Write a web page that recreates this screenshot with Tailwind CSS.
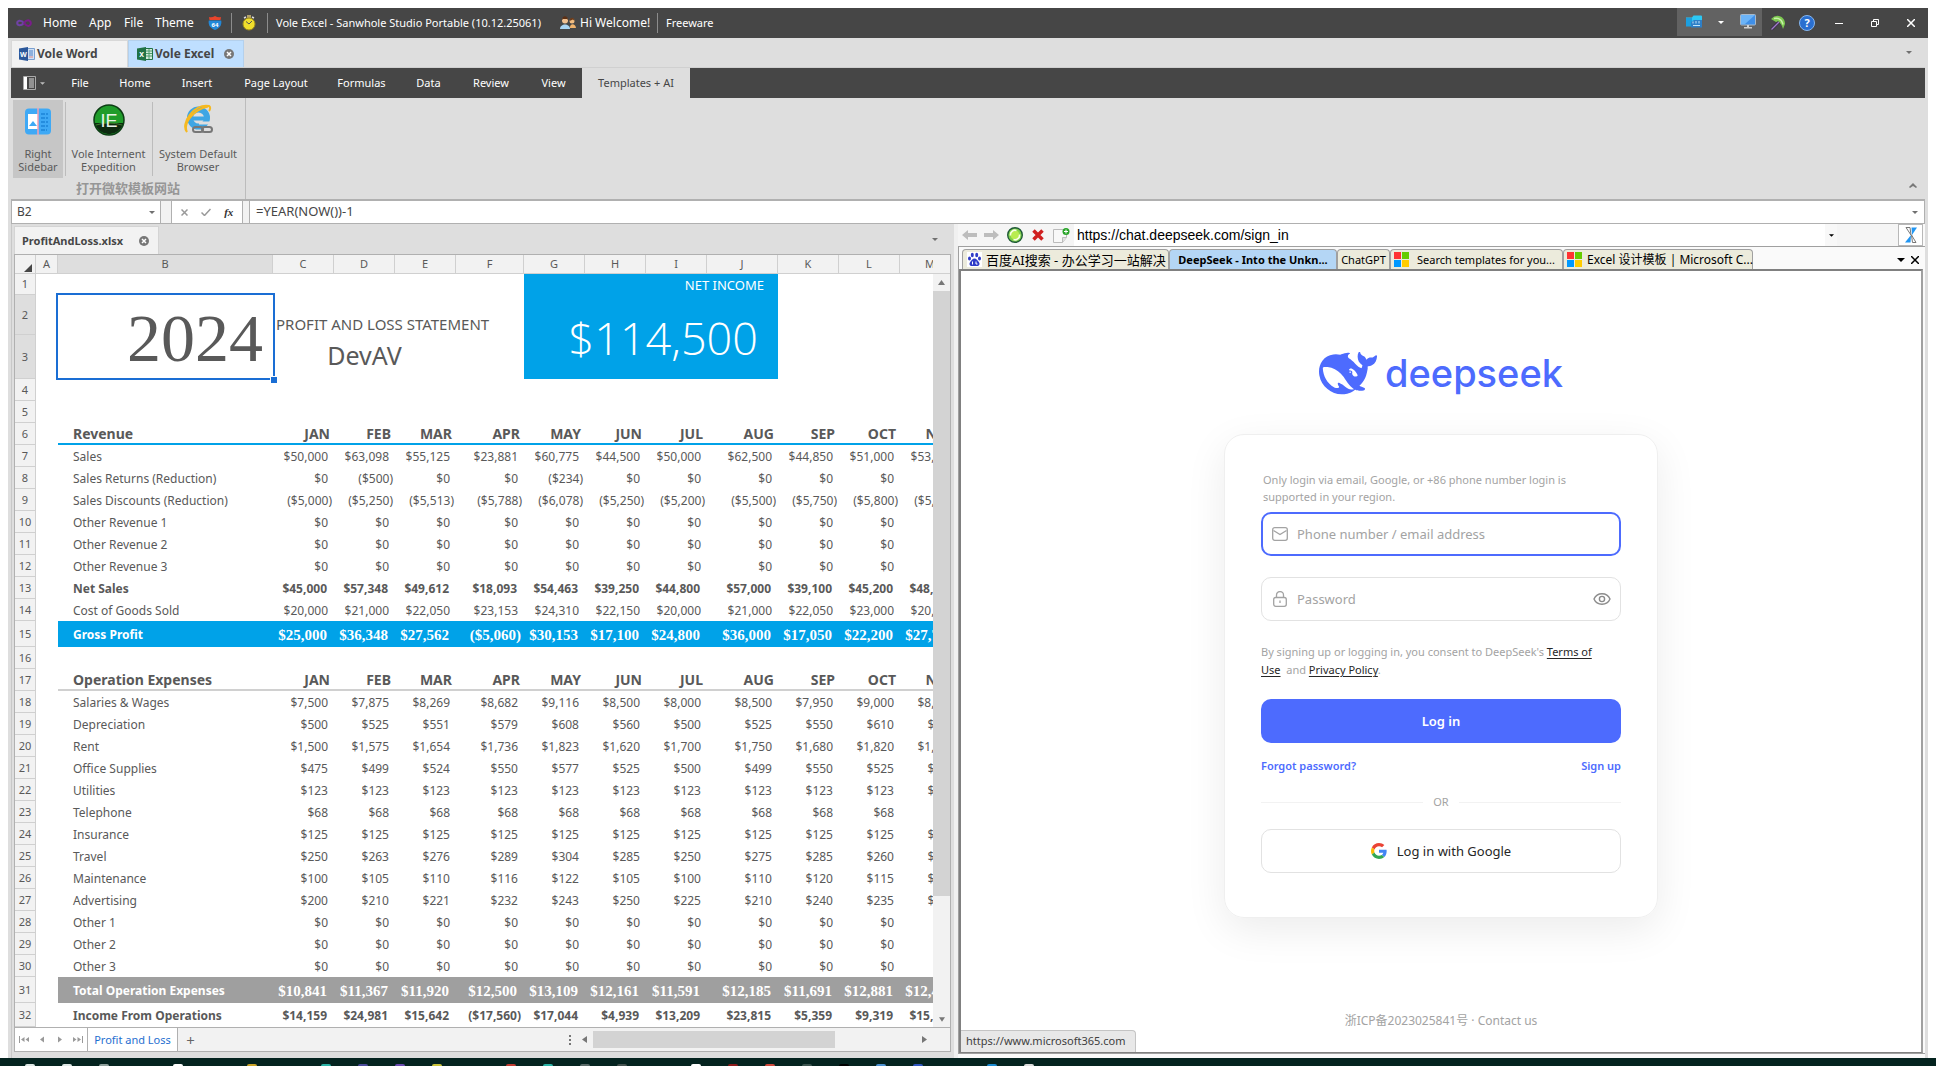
<!DOCTYPE html>
<html lang="en">
<head>
<meta charset="utf-8">
<title>Vole Excel</title>
<script src="https://cdn.jsdelivr.net/npm/@tailwindcss/browser@4"></script>
</head>
<body class="h-screen overflow-hidden bg-white pt-2 flex flex-col text-[12px] leading-4 text-[#464646] font-['Noto_Sans','Noto_Sans_CJK_SC',sans-serif]">
<div class="mx-2 flex-1 min-h-0 flex flex-col bg-[#dedede]">

  <!-- title bar -->
  <header class="h-[30px] shrink-0 bg-[#464646] text-white flex items-center whitespace-nowrap">
    <svg class="ml-2 w-4 h-4" viewBox="0 0 16 16" fill="none" stroke-width="2"><path d="M8 8C6 5.500 4.500 5.500 3.300 5.700 .5 6.300.5 9.700 3.300 10.300 5 10.500 6.500 9.500 8 8" stroke="#6f42a5"/><path d="M8 8C10 5.500 11.500 5 13 5.500c2.500 1 2.500 4.500 0 5.300C11 11.300 9.500 10 8 8" stroke="#7b1c8c"/></svg>
    <nav class="flex items-center ml-[11px]">
      <button class="w-[46px] text-left">Home</button><button class="w-[35px] text-left">App</button><button class="w-[31px] text-left">File</button><button class="w-[53px] text-left">Theme</button>
    </nav>
    <svg class="w-[14px] h-[14px]" viewBox="0 0 14 14"><path d="M1 1q3 .8 6-1 3 1.800 6 1l-.5 3H1.500z" fill="#e8452c"/><path d="M.8 4.500h12.400C14 9 12 12 7 14 2 12 0 9 .8 4.500z" fill="#2388d8"/><text x="7" y="10.500" font-size="6" font-weight="bold" text-anchor="middle" fill="#fff">64</text></svg>
    <span class="w-px h-5 bg-[#8c8c8c] ml-[9px]"></span>
    <svg class="w-[14px] h-4 ml-[10px]" viewBox="0 0 14 16"><rect x="5" width="4" height="3" fill="#b5a46a"/><path d="M2 3l2-1M12 3l-2-1" stroke="#ddd" stroke-width="1.500"/><circle cx="7" cy="9" r="6" fill="#f0de2c" stroke="#a08c1c"/><path d="M4 6.500L7 9l3-3" stroke="#555" fill="none"/></svg>
    <span class="w-px h-5 bg-[#8c8c8c] ml-[11px]"></span>
    <span class="ml-2 w-[284px] text-[11px]">Vole Excel - Sanwhole Studio Portable (10.12.25061)</span>
    <svg class="w-4 h-[14px]" viewBox="0 0 16 14"><circle cx="5" cy="4.500" r="3" fill="#f0c090"/><path d="M2 4c0-5 6-5 6 0L7 3H3z" fill="#5b3015"/><path d="M0 13c0-6 10-6 10 0z" fill="#a9d4f2"/><circle cx="12" cy="5" r="2.500" fill="#f2bd80"/><path d="M9.500 5c0-4.500 5-4.500 5 0L13 3.500z" fill="#6b3c1c"/><path d="M10 12c-.5-5 5.500-5 6 0z" fill="#f1b46c"/></svg>
    <span class="ml-1 w-[77px]">Hi Welcome!</span>
    <span class="w-px h-5 bg-[#8c8c8c]"></span>
    <span class="ml-2 text-[11px]">Freeware</span>
    <span class="flex-1"></span>
    <div class="flex items-center h-7 self-start bg-[#626262] w-[85px]">
      <button aria-label="Open folder" class="ml-[9px]"><svg class="w-4 h-[14px]" viewBox="0 0 16 14"><path d="M0 2.500h6l1.500-2H15q1 0 1 1V8H0z" fill="#2cc8f5"/><path d="M0 3h6v8.500H0z" fill="#1c9fe0"/><path d="M5 7l3-2h8v7.500H5z" fill="#2d7fc8"/><path d="M7 6.500v2M10 6v2.500M13 6v2.500M7 10.500h7" stroke="#bfe4fa"/></svg></button>
      <svg class="w-[6px] h-[3px] ml-[16px]" viewBox="0 0 6 3"><path d="M0 0h6L3 3z" fill="#fff"/></svg>
      <button aria-label="Display" class="ml-[16px]"><svg class="w-4 h-4" viewBox="0 0 16 16"><rect x=".5" y=".5" width="15" height="10.500" rx="1" fill="#3f8fe8" stroke="#a8b8c8"/><path d="M1 1h14L5 10H1z" fill="#6cb4f8"/><path d="M7 11h2v2h3v1.500H4V13h3z" fill="#d0d0d0"/></svg></button>
    </div>
    <button aria-label="Tools" class="ml-2"><svg class="w-4 h-4" viewBox="0 0 16 16"><path d="M1 4q4-4 8-3c4 1 6 4 6 8l-2 5c-1-5-4-8-7-7z" fill="#7cc850"/><path d="M4 3.500c5-1 8 2 9 6" stroke="#c9f0a8" stroke-width="1.500" fill="none"/><path d="M1.500 14.500L9 7" stroke="#3c2c4c" stroke-width="3"/><path d="M1.500 14.500L9 7" stroke="#a07cc8" stroke-width="1.200"/></svg></button>
    <button aria-label="Help" class="ml-[13px] w-4 h-4 rounded-full bg-[#2a6fd0] border border-[#86b6ee] text-[11px] leading-[14px] font-bold">?</button>
    <button aria-label="Minimize" class="ml-5 w-2"><svg class="w-2 h-2" viewBox="0 0 8 8"><path d="M0 4.500h8" stroke="#fff"/></svg></button>
    <button aria-label="Restore" class="ml-7 w-2"><svg class="w-2 h-2" viewBox="0 0 8 8" fill="none" stroke="#fff"><path d="M.5 2.500h5v5h-5zM2.500 2.500v-2h5v5h-2"/></svg></button>
    <button aria-label="Close" class="ml-7 mr-[13px] w-2"><svg class="w-2 h-2" viewBox="0 0 8 8"><path d="M0 0l8 8M8 0L0 8" stroke="#fff" stroke-width="1.500"/></svg></button>
  </header>

  <!-- document tabs -->
  <div class="h-[30px] shrink-0 flex items-end mx-[3px] font-bold text-[12px] border-b border-[#d0d0d0]">
    <button class="h-[27px] w-[117px] bg-[#f2f2f2] border border-b-0 border-[#d8d8d8] flex items-center pl-[7px] gap-[2px] whitespace-nowrap">
      <svg class="w-4 h-[14px] shrink-0" viewBox="0 0 16 14"><path d="M8 1.500h7.500v11H8z" fill="#cfe0f5" stroke="#7ba0d0"/><path d="M10 4h4M10 6h4M10 8h4" stroke="#4c80c4"/><path d="M10 10h4" stroke="#d88"/><path d="M0 1.500L9 0v14L0 12.500z" fill="#2b579a"/><text x="4.500" y="9.500" font-size="7" text-anchor="middle" fill="#fff">W</text></svg>Vole Word</button>
    <button class="h-[27px] w-[116px] bg-[#bfdfff] border border-b-0 border-[#b4d0ec] flex items-center pl-[8px] gap-[2px] whitespace-nowrap">
      <svg class="w-4 h-[14px] shrink-0" viewBox="0 0 16 14"><path d="M8 1.500h7.500v11H8z" fill="#d5ecdd" stroke="#217346"/><path d="M9 4h6M9 6.500h6M9 9h6M12 2v10" stroke="#4c9c6c"/><path d="M0 1.500L9 0v14L0 12.500z" fill="#217346"/><text x="4.500" y="9.500" font-size="7" text-anchor="middle" fill="#fff">X</text></svg>Vole Excel
      <svg class="w-[10px] h-[10px] ml-auto mr-[9px]" viewBox="0 0 10 10"><circle cx="5" cy="5" r="5" fill="#777"/><path d="M3 3l4 4M7 3L3 7" stroke="#fff" stroke-width="1.500"/></svg></button>
    <svg class="w-[6px] h-[3px] ml-auto mr-[13px] mb-[13px]" viewBox="0 0 6 3"><path d="M0 0h6L3 3z" fill="#707070"/></svg>
  </div>

  <!-- ribbon tabs -->
  <div class="h-[30px] shrink-0 mx-[3px] bg-[#464646] text-white text-[11px] flex items-stretch whitespace-nowrap">
    <button aria-label="Application menu" class="w-11 flex items-center pl-3 gap-1"><svg class="w-[13px] h-[14px]" viewBox="0 0 13 14"><path d="M.5.5h12v13H.5z" fill="none" stroke="#aaa"/><path d="M1 1h3v12H1z" fill="#fff"/><path d="M6 3h5M6 5h5M6 7h5M6 9h5M6 11h5" stroke="#ddd"/></svg><svg class="w-[5px] h-[3px]" viewBox="0 0 6 3"><path d="M0 0h6L3 3z" fill="#bbb"/></svg></button>
    <button class="w-[50px]">File</button><button class="w-[60px]">Home</button><button class="w-[64px]">Insert</button><button class="w-[94px]">Page Layout</button><button class="w-[77px]">Formulas</button><button class="w-[57px]">Data</button><button class="w-[68px]">Review</button><button class="w-[57px]">View</button><button class="w-[108px] bg-[#dedede] text-[#464646]">Templates + AI</button>
  </div>

  <!-- ribbon -->
  <div class="h-[103px] shrink-0 mx-[3px] border-b-2 border-[#b0b0b0] flex justify-between text-[11px] leading-[13px] text-[#5a5a5a]">
    <div class="w-[235px] border-r border-[#bcbcbc] flex flex-col">
      <div class="flex h-[78px] mt-[2px] pl-[2px]">
        <button class="w-[50px] bg-[#c6c6c6] flex flex-col items-center pt-[8px]">
          <svg class="w-[26px] h-[27px]" viewBox="0 0 26 27"><rect width="26" height="26" y=".5" rx="4" fill="#3fa9f5"/><rect x="3" y="6" width="10" height="15" fill="#fff"/><path d="M4 18l4-5 4 5z" fill="#3fa9f5"/><path d="M16 6h7M16 10h7M16 14h7M16 18h7M16 22h6" stroke="#1d84d8" stroke-width="1.500" stroke-dasharray="4 1"/><path d="M13 0v27" stroke="#f6a0b0" stroke-width="1.500"/></svg>
          <span class="mt-[12px] text-center">Right<br>Sidebar</span></button>
        <span class="w-px bg-[#bcbcbc] mx-[2px] my-[2px]"></span>
        <button class="w-[81px] flex flex-col items-center pt-[4px]">
          <svg class="w-8 h-8" viewBox="0 0 32 32"><circle cx="16" cy="16" r="15" fill="#1f9c2a"/><path d="M1.500 19a15 15 0 0 0 29 0z" fill="#0d2a10"/><path d="M3 21q13-4 26 0" stroke="#3f7c2c" fill="none"/><circle cx="16" cy="16" r="15" fill="none" stroke="#0c3d14" stroke-width="1.500"/><text x="16" y="22.500" font-size="18" text-anchor="middle" fill="#e8f4e8" font-family="Liberation Sans">IE</text></svg>
          <span class="mt-[11px] text-center whitespace-nowrap">Vole Internent<br>Expedition</span></button>
        <span class="w-px bg-[#bcbcbc] ml-[3px] mr-px my-[2px]"></span>
        <button class="w-[88px] flex flex-col items-center pt-[4px]">
          <svg class="w-8 h-8" viewBox="0 0 32 32" fill="none"><circle cx="16.500" cy="14" r="8.500" stroke="#3ea6e4" stroke-width="6"/><path d="M9 14.500h18" stroke="#3ea6e4" stroke-width="4"/><path d="M17 17.500h11v3H17z" fill="#dedede"/><path d="M5 28C-2 20 12-1 27 2c2 1 1 4 0 5M5 28C1 20 10 6 26 2.500" stroke="#f5b921" stroke-width="2"/><rect x="11" y="23" width="10" height="5" rx="2.500" stroke="#777" stroke-width="2"/><rect x="20" y="23" width="10" height="5" rx="2.500" stroke="#777" stroke-width="2"/></svg>
          <span class="mt-[11px] text-center whitespace-nowrap">System Default<br>Browser</span></button>
      </div>
      <p class="text-center text-[13px] leading-[20px] font-bold text-[#969696] font-['Noto_Sans_CJK_SC',sans-serif]">打开微软模板网站</p>
    </div>
    <svg class="w-[8px] h-[5px] self-end mr-[8px] mb-[11px]" viewBox="0 0 8 5"><path d="M4 0l4 4-1 1-3-2-3 2-1-1z" fill="#777"/></svg>
  </div>

  <!-- formula row -->
  <div class="h-[23px] shrink-0 mx-[3px] flex bg-[#f2f2f2] border-b border-[#b0b0b0] text-[12px]">
    <div class="w-[150px] bg-white border-x border-[#b0b0b0] flex items-center pr-[5px]"><input aria-label="Name box" value="B2" class="w-full pl-[5px] outline-none"><svg class="w-[6px] h-[3px] shrink-0" viewBox="0 0 6 3"><path d="M0 0h6L3 3z" fill="#707070"/></svg></div>
    <div class="w-[72px] ml-[10px] bg-white border-x border-[#b0b0b0] flex items-center justify-around px-[2px]">
      <button aria-label="Cancel"><svg class="w-[7px] h-[7px]" viewBox="0 0 7 7"><path d="M.5.5l6 6M6.500.5l-6 6" stroke="#999" stroke-width="1.500"/></svg></button>
      <button aria-label="Enter"><svg class="w-[10px] h-[8px]" viewBox="0 0 10 8"><path d="M.5 4.500l3 3L9.500 1" fill="none" stroke="#999" stroke-width="1.500"/></svg></button>
      <button class="italic font-bold text-[11px] text-[#333] font-['Liberation_Serif',serif]">fx</button>
    </div>
    <div class="flex-1 ml-[6px] bg-white border-x border-[#b0b0b0] flex items-center pr-[6px]"><input aria-label="Formula" value="=YEAR(NOW())-1" class="flex-1 pl-[6px] pb-[2px] outline-none text-[13px]"><svg class="w-[6px] h-[3px]" viewBox="0 0 6 3"><path d="M0 0h6L3 3z" fill="#707070"/></svg></div>
  </div>

  <main class="flex-1 min-h-0 ml-[3px] mr-[3px] grid grid-cols-[minmax(0,943fr)_minmax(0,971fr)]">
    <!-- spreadsheet pane -->
    <section class="flex flex-col min-h-0 border-l border-[#c8c8c8] pl-[2px] pr-[3px] pb-[6px]">
      <div class="h-[30px] shrink-0 flex items-end justify-between">
        <button class="w-[145px] h-[28px] bg-[#f2f2f2] border border-b-0 border-[#d4d4d4] flex items-center justify-between pl-[7px] pr-[9px] font-bold text-[11px]">ProfitAndLoss.xlsx <svg class="w-[10px] h-[10px]" viewBox="0 0 10 10"><circle cx="5" cy="5" r="5" fill="#777"/><path d="M3 3l4 4M7 3L3 7" stroke="#fff" stroke-width="1.500"/></svg></button>
        <svg class="w-[6px] h-[3px] mr-[13px] mb-[13px]" viewBox="0 0 6 3"><path d="M0 0h6L3 3z" fill="#707070"/></svg>
      </div>
      <div class="flex-1 min-h-0 flex flex-col border border-[#b0b0b0] bg-[#f2f2f2]">
        <div class="flex-1 min-h-0 flex">
          <div class="flex-1 min-w-0 overflow-hidden bg-white">
            <table class="w-[886px] table-fixed border-separate border-spacing-0 text-[#595959] leading-4 whitespace-nowrap">
              <colgroup><col class="w-[21px]"><col class="w-[22px]"><col class="w-[215px]"><col class="w-[61px]"><col class="w-[61px]"><col class="w-[61px]"><col class="w-[68px]"><col class="w-[61px]"><col class="w-[61px]"><col class="w-[61px]"><col class="w-[71px]"><col class="w-[61px]"><col class="w-[61px]"><col class="w-[61px]"></colgroup>
              <thead><tr id="cols" class="h-[19px] text-[11px]"></tr></thead>
              <tbody id="cells"></tbody>
            </table>
          </div>
          <div class="w-[17px] shrink-0 flex flex-col items-center pb-[5px]">
            <div class="w-full h-[19px] shrink-0 border-b border-[#d0d0d0]"></div>
            <svg class="w-[7px] h-[5px] mt-[6px] mb-[6px] shrink-0" viewBox="0 0 7 5"><path d="M0 5h7L3.500 0z" fill="#777"/></svg>
            <div class="w-full bg-[#d3d3d3] grow-[606] basis-0"></div>
            <div class="grow-[121] basis-0"></div>
            <svg class="w-[6px] h-[5px] shrink-0" viewBox="0 0 7 5"><path d="M0 0h7L3.500 5z" fill="#777"/></svg>
          </div>
        </div>
        <div class="h-[24px] shrink-0 border-t border-[#b0b0b0] flex items-stretch">
          <div class="w-[73px] bg-white border-r border-[#b0b0b0] flex items-center justify-between px-[4px]">
            <button aria-label="First sheet"><svg class="w-[10px] h-[7px]" viewBox="0 0 10 7" fill="#999"><path d="M0 0h1v7H0zM5.500 1v5L2 3.500zM10 1v5L6.500 3.500z"/></svg></button>
            <button aria-label="Previous sheet"><svg class="w-[10px] h-[7px]" viewBox="0 0 10 7" fill="#999"><path d="M7 .5v6L3 3.500z"/></svg></button>
            <button aria-label="Next sheet"><svg class="w-[10px] h-[7px]" viewBox="0 0 10 7" fill="#999"><path d="M3 .5v6l4-3z"/></svg></button>
            <button aria-label="Last sheet"><svg class="w-[10px] h-[7px]" viewBox="0 0 10 7" fill="#999"><path d="M9 0h1v7H9zM0 1v5l3.500-2.500zM4.500 1v5L8 3.500z"/></svg></button>
          </div>
          <button class="w-[90px] bg-white border-r border-[#b0b0b0] text-[#1f6fd0] text-[11px] whitespace-nowrap">Profit and Loss</button>
          <button class="w-[25px] text-[15px] text-[#666]">+</button>
          <div class="flex-1"></div>
          <div class="w-[385px] flex items-center">
            <svg class="w-[2px] h-[10px] ml-[4px]" viewBox="0 0 2 10" fill="#777"><path d="M0 0h2v2H0zM0 4h2v2H0zM0 8h2v2H0z"/></svg>
            <svg class="w-[5px] h-[7px] ml-[11px]" viewBox="0 0 5 7"><path d="M5 0v7L0 3.500z" fill="#777"/></svg>
            <div class="w-[242px] h-[17px] ml-[6px] bg-[#d3d3d3]"></div>
            <svg class="w-[5px] h-[7px] ml-[87px]" viewBox="0 0 5 7"><path d="M0 0v7l5-3.500z" fill="#777"/></svg>
          </div>
        </div>
      </div>
    </section>

    <!-- browser pane -->
    <section class="flex flex-col min-h-0 bg-[#fafafa] border-l-4 border-[#f0f0f0] pb-[4px]">
      <div class="h-[22px] shrink-0 flex items-center bg-[#f5f5f5] mr-[2px]">
        <button aria-label="Back" class="ml-1"><svg class="w-[15px] h-[10px]" viewBox="0 0 15 10"><path d="M0 5l6-5v3h9v4H6v3z" fill="#bdbdbd"/></svg></button>
        <button aria-label="Forward" class="ml-[7px]"><svg class="w-[15px] h-[10px]" viewBox="0 0 15 10"><path d="M15 5L9 0v3H0v4h9v3z" fill="#bdbdbd"/></svg></button>
        <button aria-label="Refresh" class="ml-2"><svg class="w-4 h-4" viewBox="0 0 16 16"><circle cx="8" cy="8" r="7.300" fill="#7ed04a" stroke="#205a38" stroke-width="1.400"/><circle cx="8" cy="8" r="4.500" fill="#b8ec50"/><path d="M3.500 8.500a4.500 4.500 0 0 1 6-5M12.500 7.500a4.500 4.500 0 0 1-6 5" stroke="#f8ffe8" stroke-width="1.600" fill="none"/></svg></button>
        <button aria-label="Stop" class="ml-[9px]"><svg class="w-3 h-3" viewBox="0 0 12 12"><path d="M1.500 1.500l9 9M10.500 1.500l-9 9" stroke="#d02020" stroke-width="3.500"/></svg></button>
        <button aria-label="New page" class="ml-[9px]"><svg class="w-[17px] h-[15px]" viewBox="0 0 17 15"><path d="M.5 1.500h13v8l-4 5h-9z" fill="#f8f8f8" stroke="#bbb"/><path d="M9.500 14.500v-5h4" fill="#e0e0e0" stroke="#bbb"/><circle cx="13" cy="3.500" r="3.500" fill="#28a428"/><path d="M13 1.500v4M11 3.500h4" stroke="#fff"/></svg></button>
        <input aria-label="Address" value="https://chat.deepseek.com/sign_in" class="ml-[4px] pl-[3px] flex-1 h-full bg-white text-black text-[14px] outline-none font-['Liberation_Sans',sans-serif]">
        <span class="w-3 h-full bg-[#f8f8f8] flex items-center justify-center"><svg class="w-[5px] h-[3px]" viewBox="0 0 6 3"><path d="M0 0h6L3 3z" fill="#000"/></svg></span>
        <span class="w-[61px]"></span>
        <button aria-label="Toggle pane" class="w-[25px] h-full bg-white border border-[#b8b8b8] flex items-center justify-center"><svg class="w-3 h-4" viewBox="0 0 12 16"><path d="M1 .5h4l1 7.500z" fill="#fff" stroke="#777"/><path d="M6.500.5H12L7 8z" fill="#2196f3"/><path d="M6 8L0 15.500h5.500z" fill="#2196f3"/><path d="M6.500 8l4.500 7.500H7.500z" fill="#fff" stroke="#777"/></svg></button>
      </div>
      <div class="flex-1 min-h-0 border border-r-0 border-[#a0a0a0] flex flex-col">
        <div class="h-[22px] shrink-0 flex items-end pl-[3px] text-black text-[11px] whitespace-nowrap">
          <button class="h-[20px] w-[207px] bg-[#ecebdc] border border-b-0 border-[#a0a0a0] rounded-t-sm flex items-center pl-[4px] gap-[4px]">
            <svg class="w-[15px] h-[15px] shrink-0" viewBox="0 0 15 15"><rect width="15" height="15" fill="#fff"/><g fill="#2f3cc8"><ellipse cx="2.500" cy="6.500" rx="1.500" ry="2"/><ellipse cx="5.300" cy="3" rx="1.500" ry="2.200"/><ellipse cx="9.700" cy="3" rx="1.500" ry="2.200"/><ellipse cx="12.500" cy="6.500" rx="1.500" ry="2"/><path d="M7.500 6.500c2 0 3 2 4.300 3.500 1.500 2 .5 4-1.800 4H5c-2.300 0-3.300-2-1.800-4C4.500 8.500 5.500 6.500 7.500 6.500z"/></g><path d="M5.500 9.500v3M9 9.500v2.500h1.500" stroke="#fff" fill="none"/></svg><span class="text-[13px]">百度AI搜索 - 办公学习一站解决</span></button>
          <button class="h-[20px] w-[168px] bg-[#b4d6f5] border border-b-0 border-[#a0a0a0] rounded-t-sm font-bold">DeepSeek - Into the Unkn...</button>
          <button class="h-[20px] w-[53px] bg-[#ecebdc] border border-b-0 border-[#a0a0a0] rounded-t-sm">ChatGPT</button>
          <button class="h-[20px] w-[173px] bg-[#ecebdc] border border-b-0 border-[#a0a0a0] rounded-t-sm flex items-center pl-[3px] gap-[8px]">
            <svg class="w-[15px] h-[15px] shrink-0" viewBox="0 0 16 16"><path d="M0 0h7.500v7.500H0z" fill="#f33"/><path d="M8.500 0H16v7.500H8.500z" fill="#6c0"/><path d="M0 8.500h7.500V16H0z" fill="#0098ff"/><path d="M8.500 8.500H16V16H8.500z" fill="#fc0"/></svg>Search templates for you...</button>
          <button class="h-[20px] w-[190px] bg-[#ecebdc] border border-b-0 border-[#a0a0a0] rounded-t-sm flex items-center pl-[3px] gap-[5px] text-[12px]">
            <svg class="w-[15px] h-[15px] shrink-0" viewBox="0 0 16 16"><path d="M0 0h7.500v7.500H0z" fill="#f33"/><path d="M8.500 0H16v7.500H8.500z" fill="#6c0"/><path d="M0 8.500h7.500V16H0z" fill="#0098ff"/><path d="M8.500 8.500H16V16H8.500z" fill="#fc0"/></svg>Excel 设计模板 | Microsoft C...</button>
          <span class="flex-1"></span>
          <svg class="w-[8px] h-[4px] mb-[7px]" viewBox="0 0 8 4"><path d="M0 0h8L4 4z"/></svg>
          <svg class="w-[8px] h-[8px] ml-[6px] mr-[6px] mb-[5px]" viewBox="0 0 8 8"><path d="M0 0l8 8M8 0L0 8" stroke="#000" stroke-width="1.500"/></svg>
        </div>
        <div class="flex-1 min-h-0 mr-[2px] bg-white border-2 border-b border-[#808080] border-r-[#a0a0a0] flex flex-col items-center relative text-[#a3a3a3] overflow-hidden">
          <div class="flex items-center gap-[8px] mt-[79px] text-[#4d6bfe] h-[46px]">
            <svg class="w-[58px] h-[43px]" viewBox="0 3.300 24 17.500" fill="currentColor"><path d="M23.748 4.482c-.254-.124-.364.113-.512.234-.051.039-.094.09-.137.136-.372.397-.806.657-1.373.626-.829-.046-1.537.214-2.163.848-.133-.782-.575-1.248-1.247-1.548-.352-.156-.708-.311-.955-.65-.172-.241-.219-.51-.305-.774-.055-.16-.11-.323-.293-.35-.2-.031-.278.136-.356.276-.313.572-.434 1.202-.422 1.840.027 1.436.633 2.580 1.838 3.393.137.093.172.187.129.323-.082.280-.180.552-.266.833-.055.179-.137.217-.329.140a5.526 5.526 0 0 1-1.736-1.180c-.857-.828-1.631-1.742-2.597-2.458a11.365 11.365 0 0 0-.689-.471c-.985-.957.130-1.743.388-1.836.270-.098.093-.432-.779-.428-.872.004-1.670.295-2.687.684a3.055 3.055 0 0 1-.465.137 9.597 9.597 0 0 0-2.883-.102c-1.885.210-3.390 1.102-4.497 2.623C.082 8.606-.231 10.684.152 12.850c.403 2.284 1.569 4.175 3.360 5.653 1.858 1.533 3.997 2.284 6.438 2.140 1.482-.085 3.133-.284 4.994-1.860.470.234.962.327 1.780.397.630.059 1.236-.030 1.705-.128.735-.156.684-.837.419-.961-2.155-1.004-1.682-.595-2.113-.926 1.096-1.296 2.746-2.642 3.392-7.003.050-.347.007-.565 0-.845-.004-.170.035-.237.230-.256a4.173 4.173 0 0 0 1.545-.475c1.396-.763 1.960-2.015 2.093-3.517.020-.230-.004-.467-.247-.588zM11.581 18c-2.089-1.642-3.102-2.183-3.520-2.160-.392.024-.321.471-.235.763.090.288.207.486.371.739.114.167.192.416-.113.603-.673.416-1.842-.140-1.897-.167-1.361-.802-2.500-1.860-3.301-3.307-.774-1.393-1.224-2.887-1.298-4.482-.020-.386.093-.522.477-.592a4.696 4.696 0 0 1 1.529-.039c2.132.312 3.946 1.265 5.468 2.774.868.860 1.525 1.887 2.202 2.891.720 1.066 1.494 2.082 2.480 2.914.348.292.625.514.891.677-.802.090-2.140.110-3.054-.614zm1-6.440a.306.306 0 0 1 .415-.287.302.302 0 0 1 .200.288.306.306 0 0 1-.310.307.303.303 0 0 1-.304-.308zm3.110 1.596c-.200.081-.399.151-.590.160a1.245 1.245 0 0 1-.798-.254c-.274-.230-.470-.358-.552-.758a1.730 1.730 0 0 1 .016-.588c.070-.327-.008-.537-.239-.727-.187-.156-.426-.199-.688-.199a.559.559 0 0 1-.254-.078c-.110-.054-.200-.190-.114-.358.028-.054.160-.186.192-.210.356-.202.767-.136 1.146.016.352.144.618.408 1.001.782.391.451.462.576.685.914.176.265.336.537.445.848.067.195-.019.354-.250.452z"/></svg>
            <span class="text-[38px] leading-[44px] font-medium font-['Inter',sans-serif]">deepseek</span>
          </div>
          <form class="w-[434px] h-[484px] mt-[38px] shrink-0 rounded-[20px] border border-[#efefef] shadow-[0_12px_40px_rgba(0,0,0,0.08)] px-[36px] pt-[36px] flex flex-col" onsubmit="return false">
            <p class="text-[11px] leading-[17px] pl-[2px]">Only login via email, Google, or +86 phone number login is supported in your region.</p>
            <label class="mt-[7px] h-11 shrink-0 rounded-[10px] border-2 border-[#4d6bfe] flex items-center pl-[9px]">
              <svg class="w-4 h-[14px]" viewBox="0 0 16 14" fill="none" stroke="#a3a3a3" stroke-width="1.300"><rect x=".7" y=".7" width="14.600" height="12.600" rx="2"/><path d="M1.500 3.500L8 7.500l6.500-4"/></svg>
              <input aria-label="Phone number / email address" placeholder="Phone number / email address" class="ml-[9px] flex-1 outline-none text-[13px] placeholder:text-[#a3a3a3]"></label>
            <label class="mt-[21px] h-11 shrink-0 rounded-[10px] border border-[#e2e2e2] flex items-center pl-[11px] pr-[9px]">
              <svg class="w-[14px] h-4" viewBox="0 0 14 16" fill="none" stroke="#a3a3a3" stroke-width="1.300"><rect x=".7" y="6.500" width="12.600" height="8.800" rx="2"/><path d="M3.500 6.500V4a3.500 3.500 0 0 1 7 0v2.500M7 9.500v2.500"/></svg>
              <input aria-label="Password" type="password" placeholder="Password" class="ml-[10px] flex-1 outline-none text-[13px] placeholder:text-[#a3a3a3]">
              <svg class="w-[18px] h-[12px]" viewBox="0 0 18 12" fill="none" stroke="#8b8b8b" stroke-width="1.400"><path d="M1 6c3-7 13-7 16 0-3 7-13 7-16 0z"/><circle cx="9" cy="6" r="2.600"/></svg></label>
            <p class="mt-[22px] text-[11px] leading-[18px]">By signing up or logging in, you consent to DeepSeek's <a href="#" class="underline text-[#262626] underline-offset-2">Terms of<br>Use</a>&nbsp; and <a href="#" class="underline text-[#262626] underline-offset-2">Privacy Policy</a>.</p>
            <button class="mt-[20px] h-11 shrink-0 rounded-[10px] bg-[#4d6bfe] text-white font-semibold text-[13px]">Log in</button>
            <div class="mt-[15px] flex justify-between text-[11px] leading-4 font-semibold text-[#4d6bfe]"><a href="#">Forgot password?</a><a href="#">Sign up</a></div>
            <div class="mt-[20px] flex items-center gap-[10px] text-[11px] leading-4"><span class="h-px flex-1 bg-[#f2f2f2]"></span>OR<span class="h-px flex-1 bg-[#f2f2f2]"></span></div>
            <button class="mt-[19px] h-11 shrink-0 rounded-[10px] border border-[#e2e2e2] text-[#262626] text-[13px] flex items-center justify-center gap-[10px]">
              <svg class="w-4 h-4" viewBox="0 0 48 48"><path fill="#EA4335" d="M24 9.500c3.540 0 6.710 1.220 9.210 3.600l6.850-6.850C35.900 2.380 30.470 0 24 0 14.620 0 6.510 5.380 2.560 13.220l7.980 6.190C12.430 13.720 17.740 9.500 24 9.500z"/><path fill="#4285F4" d="M46.980 24.550c0-1.570-.150-3.090-.380-4.550H24v9.020h12.940c-.580 2.960-2.260 5.480-4.780 7.180l7.730 6c4.510-4.180 7.090-10.360 7.090-17.650z"/><path fill="#FBBC05" d="M10.530 28.590c-.480-1.450-.760-2.990-.760-4.590s.270-3.140.760-4.590l-7.980-6.190C.920 16.460 0 20.120 0 24c0 3.880.920 7.540 2.560 10.780l7.970-6.190z"/><path fill="#34A853" d="M24 48c6.480 0 11.930-2.130 15.890-5.810l-7.730-6c-2.150 1.450-4.920 2.300-8.160 2.300-6.260 0-11.570-4.220-13.470-9.910l-7.980 6.190C6.510 42.620 14.620 48 24 48z"/></svg>Log in with Google</button>
          </form>
          <p class="mt-auto mb-[23px] text-[12px] leading-4"><a href="#">浙ICP备2023025841号</a> · <a href="#">Contact us</a></p>
          <span class="absolute left-0 bottom-0 w-[175px] h-[22px] bg-[#e8e8e8] border-t border-r border-[#c4c4c4] rounded-tr text-[11px] leading-[20px] text-[#404040] pl-[5px]">https://www.microsoft365.com</span>
        </div>
      </div>
    </section>
  </main>
</div>

<!-- top edge of the desktop taskbar -->
<footer class="h-[8px] shrink-0 bg-[#04231f] pl-[25px] overflow-hidden">
  <div id="bar" class="flex items-end h-full gap-[27px]"></div>
</footer>

<script>
const base = 'p-0 pt-[2px] align-middle text-right h-[22px] ';
const num = { n: 'pr-[6px] text-[12px]', b: 'pr-[7px] text-[12px] font-bold', h: 'pr-[4px] text-[14px] font-bold', s: "pr-[7px] text-[15px] font-bold font-['Liberation_Serif',serif]" };
const rowHead = 'p-0 text-center text-[11px] font-normal border-r border-b border-[#d0d0d0] ';
document.getElementById('cols').innerHTML =
  '<th class="p-0 border-r border-b border-[#d0d0d0] bg-[#f2f2f2]"><svg class="w-[8px] h-[8px] ml-auto mr-[3px] mt-[7px]" viewBox="0 0 8 8"><path d="M8 0v8H0z" fill="#464646"/></svg></th>' +
  [...'ABCDEFGHIJKLM'].map(c => `<th class="p-0 font-normal border-r border-b border-[#d0d0d0] ${c === 'B' ? 'bg-[#dedede]' : 'bg-[#f2f2f2]'}">${c}</th>`).join('');

const months = 'JAN FEB MAR APR MAY JUN JUL AUG SEP OCT NOV';
const zero = '0 0 0 0 0 0 0 0 0 0 0';
const rows = [
  ['blank', '', ''], ['blank', '', ''],
  ['h', 'Revenue', months, 'border-b-2 border-[#00a2e8]'],
  ['n', 'Sales', '50,000 63,098 55,125 23,881 60,775 44,500 50,000 62,500 44,850 51,000 53,550'],
  ['n', 'Sales Returns (Reduction)', '0 (500) 0 0 (234) 0 0 0 0 0 0'],
  ['n', 'Sales Discounts (Reduction)', '(5,000) (5,250) (5,513) (5,788) (6,078) (5,250) (5,200) (5,500) (5,750) (5,800) (5,150)'],
  ['n', 'Other Revenue 1', zero], ['n', 'Other Revenue 2', zero], ['n', 'Other Revenue 3', zero],
  ['b', 'Net Sales', '45,000 57,348 49,612 18,093 54,463 39,250 44,800 57,000 39,100 45,200 48,400'],
  ['n', 'Cost of Goods Sold', '20,000 21,000 22,050 23,153 24,310 22,150 20,000 21,000 22,050 23,000 20,650'],
  ['s', 'Gross Profit', '25,000 36,348 27,562 (5,060) 30,153 17,100 24,800 36,000 17,050 22,200 27,750', 'bg-[#00a2e8] text-white', 'h-[26px]'],
  ['blank', '', ''],
  ['h', 'Operation Expenses', months, 'border-b-2 border-[#d0d0d0]'],
  ['n', 'Salaries & Wages', '7,500 7,875 8,269 8,682 9,116 8,500 8,000 8,500 7,950 9,000 8,950'],
  ['n', 'Depreciation', '500 525 551 579 608 560 500 525 550 610 580'],
  ['n', 'Rent', '1,500 1,575 1,654 1,736 1,823 1,620 1,700 1,750 1,680 1,820 1,780'],
  ['n', 'Office Supplies', '475 499 524 550 577 525 500 499 550 525 530'],
  ['n', 'Utilities', '123 123 123 123 123 123 123 123 123 123 123'],
  ['n', 'Telephone', '68 68 68 68 68 68 68 68 68 68 68'],
  ['n', 'Insurance', '125 125 125 125 125 125 125 125 125 125 125'],
  ['n', 'Travel', '250 263 276 289 304 285 250 275 285 260 275'],
  ['n', 'Maintenance', '100 105 110 116 122 105 100 110 120 115 112'],
  ['n', 'Advertising', '200 210 221 232 243 250 225 210 240 235 225'],
  ['n', 'Other 1', zero], ['n', 'Other 2', zero], ['n', 'Other 3', zero],
  ['s', 'Total Operation Expenses', '10,841 11,367 11,920 12,500 13,109 12,161 11,591 12,185 11,691 12,881 12,450', 'bg-[#9f9f9f] text-white', 'h-[26px]'],
  ['b', 'Income From Operations', '14,159 24,981 15,642 (17,560) 17,044 4,939 13,209 23,815 5,359 9,319 15,300', '', 'h-[24px]'],
  ['blank', '', '']
];
let html = `
<tr class="h-[21px]"><th class="${rowHead} bg-[#f2f2f2]">1</th><td></td><td></td><td colspan="4"></td><td colspan="4" class="bg-[#00a2e8] text-white text-right pr-[14px] py-0 text-[13px]">NET INCOME</td><td colspan="3"></td></tr>
<tr class="h-[40px]"><th class="${rowHead} bg-[#dedede]">2</th><td></td>
<td rowspan="2" class="relative p-0 pr-[10px] pt-[2px] text-right text-[68px] leading-[66px] font-['Liberation_Serif',serif]">2024<span class="absolute -left-[2px] -right-[2px] -top-[2px] -bottom-[1px] border-2 border-[#1a6ed4]"></span><span class="absolute -right-[4px] -bottom-[4px] w-[7px] h-[7px] bg-[#1a6ed4] border-l border-t border-white"></span></td>
<td colspan="4" class="p-0 pl-[3px] align-bottom text-[15px] leading-[22px]">PROFIT AND LOSS STATEMENT</td>
<td colspan="4" rowspan="2" class="bg-[#00a2e8] text-white p-0 pr-[20px] pt-[2px] text-right text-[45px] leading-[50px] font-light font-['Open_Sans',sans-serif]">$114,500</td><td colspan="3"></td></tr>
<tr class="h-[44px]"><th class="${rowHead} bg-[#dedede]">3</th><td></td><td colspan="3" class="p-0 pb-[5px] text-center text-[25px] leading-[36px]">DevAV</td><td></td><td colspan="3"></td></tr>`;
rows.forEach(([kind, label, vals, extra = '', h = 'h-[22px]'], i) => {
  html += `<tr class="${h}"><th class="${rowHead} bg-[#f2f2f2]">${i + 4}</th><td class="p-0"></td>`;
  if (kind === 'blank') html += '<td colspan="12" class="p-0"></td>';
  else {
    const lab = kind === 'n' ? 'text-[12px]' : kind === 'h' ? 'text-[14px] font-bold' : 'text-[12px] font-bold';
    html += `<td class="p-0 pt-[2px] pl-[15px] text-left align-middle ${lab} ${extra}">${label.replace('&', '&amp;')}</td>`;
    vals.split(' ').forEach(v => {
      const neg = v[0] === '(';
      const t = kind === 'h' ? v : neg ? '($' + v.slice(1) : '$' + v;
      html += `<td class="${base}${extra} ${num[kind]}">${neg ? `<span class="-mr-[4px]">${t}</span>` : t}</td>`;
    });
  }
  html += '</tr>';
});
document.getElementById('cells').innerHTML = html;

const tints = ['#dfe8e6', '#dfe8e6', '#8fa09c', '', '#ffffff', '', '#c9a227', '', '#2ab3a6', '#4a4a9a', '#6a4ab0', '#c9c23a', '', '#c03a30', '#2ab3a6', '#5a6a68', '#44524f', '', '#ffffff', '#8c1a1a', '#d0493c', '#3d5550', '#000000', '#4a90d0', '#2f56c0', '', '#1a8ad0', '#dddddd'];
document.getElementById('bar').innerHTML = tints.map(c => `<span class="w-[10px] h-[2px] rounded-t-full" style="background:${c || 'transparent'}"></span>`).join('');
</script>
</body>
</html>
